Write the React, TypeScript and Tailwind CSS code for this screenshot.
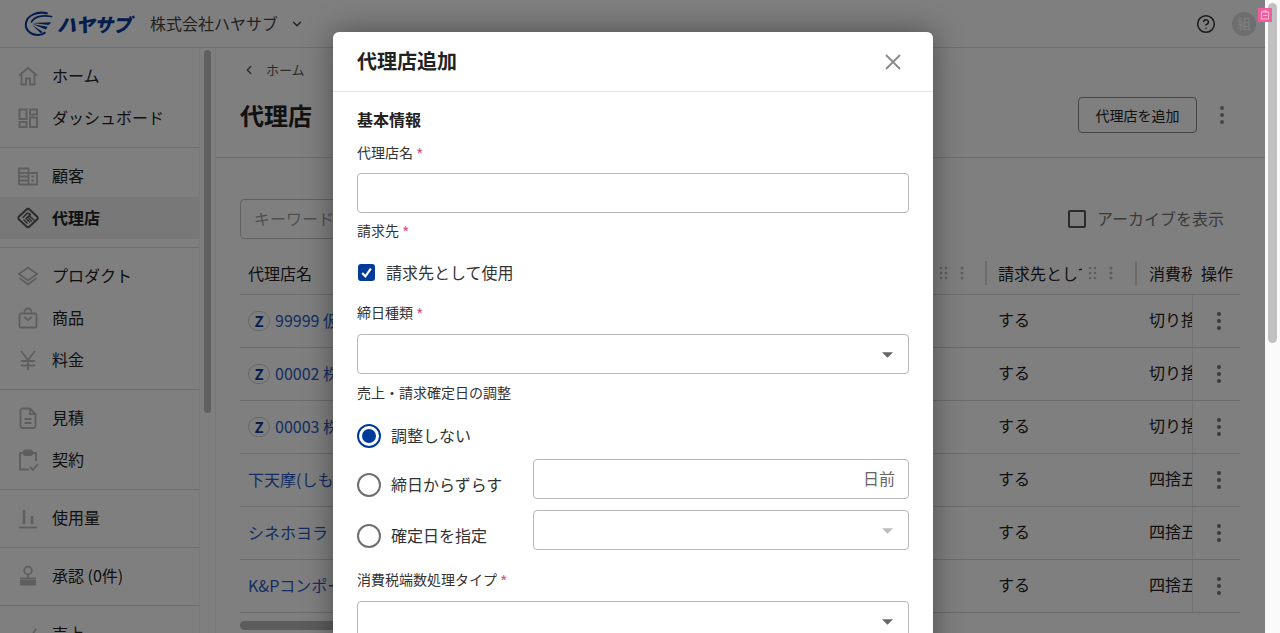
import { ChevronDown, ChevronLeft, CircleHelp } from "lucide-react";

const ink = "#222222";

function Dots({ className = "" }: { className?: string }) {
  return (
    <svg viewBox="0 0 6 20" className={`w-[6px] h-[20px] ${className}`} fill="currentColor">
      <circle cx="3" cy="3" r="2" />
      <circle cx="3" cy="10" r="2" />
      <circle cx="3" cy="17" r="2" />
    </svg>
  );
}

function DragHandle() {
  return (
    <svg viewBox="0 0 32 16" className="w-[32px] h-[16px] text-[#bdbdbd]" fill="currentColor">
      <circle cx="2" cy="3" r="1.3" /><circle cx="7" cy="3" r="1.3" />
      <circle cx="2" cy="8" r="1.3" /><circle cx="7" cy="8" r="1.3" />
      <circle cx="2" cy="13" r="1.3" /><circle cx="7" cy="13" r="1.3" />
      <circle cx="23" cy="3" r="1.6" /><circle cx="23" cy="8" r="1.6" /><circle cx="23" cy="13" r="1.6" />
    </svg>
  );
}

function Logo() {
  return (
    <div className="flex items-center">
      <svg viewBox="0 0 34 30" className="w-[31px] h-[28px] text-[#0b3a9c]" fill="none" stroke="currentColor">
        <path d="M26 3.500C15 .5 3 5 2 15c-.6 7 6 12.500 14 12 3.500-.2 6-1.500 7.500-3" strokeWidth="2.200" />
        <path d="M31 7C20 4.500 10 7 8 13.500" strokeWidth="1.800" />
        <path d="M9 14l21-1-3 3z" fill="currentColor" stroke="none" />
        <path d="M9 15l17 3-2 3z" fill="currentColor" stroke="none" />
        <path d="M9 16l12 8-3 1z" fill="currentColor" stroke="none" />
      </svg>
      <span className="ml-[2px] text-[19px] leading-none font-black italic text-[#0b3a9c] tracking-[-0.5px]">ハヤサブ</span>
    </div>
  );
}

const iconProps = {
  viewBox: "0 0 24 24",
  fill: "none",
  stroke: "currentColor",
  strokeWidth: 1.8,
  className: "w-[24px] h-[24px]",
};

const icons: Record<string, React.ReactNode> = {
  home: (
    <svg {...iconProps}>
      <path d="M3 11.500 12 4l9 7.500" />
      <path d="M5.500 10v10.500h4.500v-6h4v6h4.500V10" />
    </svg>
  ),
  dashboard: (
    <svg {...iconProps} strokeWidth={2}>
      <rect x="3.500" y="3.500" width="7" height="9.500" />
      <rect x="14" y="3.500" width="7" height="5" />
      <rect x="14" y="11.500" width="7" height="9.500" />
      <rect x="3.500" y="16" width="7" height="5" />
    </svg>
  ),
  customer: (
    <svg {...iconProps}>
      <path d="M3 20.500V4.500h9.500v16M12.500 9H21v11.500H3" />
      <path d="M3 8.800h9.500M3 12.500h9.500M3 16.500h9.500M15.500 12.500h2.500M15.500 16.500h2.500" />
    </svg>
  ),
  agency: (
    <svg {...iconProps} strokeWidth={2} strokeLinejoin="round" strokeLinecap="round">
      <path d="M10.500 3.500a2 2 0 0 1 3 0l7.500 7a2 2 0 0 1 0 3l-7.500 7a2 2 0 0 1-3 0l-7.500-7a2 2 0 0 1 0-3z" />
      <path d="M7 11.500 11.500 7l3 1.500-4 3.500M10.500 12l3-2 4.500 4M8 14l3 3M10 12.500l3.500 3.500M12 11.500l3.500 3.500" strokeWidth="1.500" />
    </svg>
  ),
  product: (
    <svg {...iconProps}>
      <path d="M12 3.500 21 10l-9 6.500L3 10z" />
      <path d="M3.500 14 12 20.500 20.500 14" />
    </svg>
  ),
  item: (
    <svg {...iconProps}>
      <rect x="3.500" y="7.500" width="17" height="14" rx="1.500" />
      <path d="M8.500 7.500V6a3.500 3.500 0 0 1 7 0v1.500M8 11l4 3 4-3" />
    </svg>
  ),
  price: (
    <svg {...iconProps}>
      <path d="M5 3l7 9 7-9M12 12v10M5 13h14M5 17.500h14" />
    </svg>
  ),
  quote: (
    <svg {...iconProps}>
      <path d="M4.500 4.500a2 2 0 0 1 2-2H14l5.500 5.500v12a2 2 0 0 1-2 2h-11a2 2 0 0 1-2-2z" />
      <path d="M14 2.500V8h5.500M8.500 13h7M8.500 17h7" />
    </svg>
  ),
  contract: (
    <svg {...iconProps}>
      <path d="M8 5H4v16.500h9M16 5h4v8" />
      <rect x="8" y="2.500" width="8" height="4.500" rx="1" fill="currentColor" />
      <path d="m14 19 3 3 5-6" />
    </svg>
  ),
  usage: (
    <svg {...iconProps}>
      <path d="M3 21.500h18" />
      <path d="M8 4v14M16 10v8" strokeWidth="2.600" />
    </svg>
  ),
  approval: (
    <svg {...iconProps}>
      <circle cx="12" cy="6.500" r="3.800" />
      <path d="M12 10.300V14M4 14.500h16" />
      <rect x="4" y="16" width="16" height="5.500" fill="currentColor" stroke="none" />
    </svg>
  ),
  sales: (
    <svg {...iconProps}>
      <path d="M4 20 10 12l4 4 6-9" />
    </svg>
  ),
};

const navGroups = [
  [
    { key: "home", label: "ホーム" },
    { key: "dashboard", label: "ダッシュボード" },
  ],
  [
    { key: "customer", label: "顧客" },
    { key: "agency", label: "代理店", active: true },
  ],
  [
    { key: "product", label: "プロダクト" },
    { key: "item", label: "商品" },
    { key: "price", label: "料金" },
  ],
  [
    { key: "quote", label: "見積" },
    { key: "contract", label: "契約" },
  ],
  [{ key: "usage", label: "使用量" }],
  [{ key: "approval", label: "承認 (0件)" }],
  [{ key: "sales", label: "売上" }],
];

function Sidebar() {
  return (
    <div className="flex h-full shrink-0">
      <nav className="w-[200px] overflow-hidden border-r border-[#f2f2f2]">
        {navGroups.map((group, i) => (
          <div key={i} className="pt-[7px] pb-2 border-b border-[#dcdcdc]">
            {group.map((item: { key: string; label: string; active?: boolean }) => (
              <div
                key={item.key}
                className={`flex items-center h-[42px] pl-[16px] gap-[12px] text-[16px] ${item.active ? "bg-[#f0f0f0] font-bold" : ""}`}
              >
                <span className={item.active ? "text-[#555555]" : "text-[#bdbdbd]"}>{icons[item.key]}</span>
                <span className="-mt-[2px]">{item.label}</span>
              </div>
            ))}
          </div>
        ))}
      </nav>
      <div className="w-[15px] pt-[2px] px-[4px]">
        <div className="h-[363px] rounded-full bg-[#c1c1c1]" />
      </div>
    </div>
  );
}

const rows = [
  { z: true, name: "99999 仮代理店", tax: "切り捨て" },
  { z: true, name: "00002 株式会社", tax: "切り捨て" },
  { z: true, name: "00003 株式会社", tax: "切り捨て" },
  { z: false, name: "下天摩(しもてんま)", tax: "四捨五入" },
  { z: false, name: "シネホヨラ", tax: "四捨五入" },
  { z: false, name: "K&Pコンポーネント", tax: "四捨五入" },
];

function AgencyTable() {
  return (
    <div className="mt-[16px] w-[1000px]">
      <div className="flex h-[40px] items-center border-b border-[#d8d8d8] pb-[4px] text-[16px]">
        <div className="w-[745px] shrink-0 pl-2 flex items-center">
          <span>代理店名</span>
          <span className="ml-auto mr-[14px]"><DragHandle /></span>
        </div>
        <div className="w-[150px] shrink-0 h-[24px] border-l-2 border-[#d8d8d8] pl-[11px] flex items-center">
          <span className="w-[84px] overflow-hidden whitespace-nowrap">請求先として使用</span>
          <span className="ml-[6px]"><DragHandle /></span>
        </div>
        <div className="w-[57px] shrink-0 h-[24px] border-l-2 border-[#d8d8d8] pl-[12px] overflow-hidden whitespace-nowrap">
          消費税端数
        </div>
        <div className="w-[48px] shrink-0 pl-[9px] whitespace-nowrap">操作</div>
      </div>
      {rows.map((row) => (
        <div key={row.name} className="flex h-[53px] items-center border-b border-[#d8d8d8] text-[16px]">
          <div className="w-[745px] shrink-0 pl-2 flex items-center text-[#2a5bc4]">
            {row.z && (
              <span className="mr-[5px] w-[22px] h-[20px] rounded-full border border-[#cfcfcf] flex items-center justify-center text-[15px] font-bold text-[#0b3a9c]">
                Z
              </span>
            )}
            <span className="-mt-[2px]">{row.name}</span>
          </div>
          <div className="w-[150px] shrink-0 pl-[13px] -mt-[4px]">する</div>
          <div className="w-[57px] shrink-0 pl-[14px] -mt-[4px] overflow-hidden whitespace-nowrap">{row.tax}</div>
          <div className="w-[48px] shrink-0 h-full border-l border-[#e6e6e6] flex items-center pl-[23px] text-[#777777]">
            <Dots />
          </div>
        </div>
      ))}
      <div className="mt-[8px] h-[9px] w-[400px] rounded-full bg-[#b8b8b8]" />
    </div>
  );
}

function Label({ text, required = true }: { text: string; required?: boolean }) {
  return (
    <div className="h-[20px] text-[14px] leading-[18px] text-[#333333]">
      {text}
      {required && <span className="ml-[3px] text-[16px] leading-none align-[-3px] text-[#e0557f]">*</span>}
    </div>
  );
}

function Caret({ light = false }: { light?: boolean }) {
  return (
    <svg viewBox="0 0 12 6" className={`mt-[2px] w-[11px] h-[6px] ${light ? "text-[#bdbdbd]" : "text-[#666666]"}`} fill="currentColor">
      <path d="M0 0h12L6 6z" />
    </svg>
  );
}

function SelectBox({ className = "", light = false }: { className?: string; light?: boolean }) {
  return (
    <div className={`h-[40px] border border-[#b8b8b8] rounded-[4px] bg-white flex items-center justify-end pr-[15px] ${className}`}>
      <Caret light={light} />
    </div>
  );
}

function Radio({ checked = false }: { checked?: boolean }) {
  return (
    <span className={`w-[24px] h-[24px] shrink-0 rounded-full border-2 flex items-center justify-center ${checked ? "border-[#003a9b]" : "border-[#6f6f6f]"}`}>
      {checked && <span className="w-[14px] h-[14px] rounded-full bg-[#003a9b]" />}
    </span>
  );
}

function Modal() {
  return (
    <div className="absolute left-[333px] top-[32px] w-[600px] h-[640px] bg-white rounded-t-[6px] shadow-[0_0_30px_rgba(0,0,0,0.4)] text-[#222222]">
      <div className="h-[60px] border-b border-[#e5e5e5] pl-6 pr-[32px] flex items-center justify-between">
        <h2 className="text-[20px] font-bold -mt-[2px]">代理店追加</h2>
        <svg viewBox="0 0 16 16" className="w-[16px] h-[16px] text-[#8a8a8a]" fill="none" stroke="currentColor" strokeWidth="1.800">
          <path d="M1 1l14 14M15 1 1 15" />
        </svg>
      </div>
      <div className="px-6 pt-4">
        <h3 className="h-[24px] text-[16px] leading-[22px] font-bold">基本情報</h3>
        <div className="mt-[11px]"><Label text="代理店名" /></div>
        <div className="mt-[10px] h-[40px] border border-[#b8b8b8] rounded-[4px]" />
        <div className="mt-2"><Label text="請求先" /></div>
        <div className="mt-5 h-[24px] flex items-center text-[16px] text-[#333333]">
          <span className="ml-[1px] -mt-[1px] w-[17px] h-[17px] rounded-[3px] bg-[#003a9b] flex items-center justify-center">
            <svg viewBox="0 0 12 12" className="w-[13px] h-[13px]" fill="none" stroke="white" strokeWidth="2">
              <path d="m2 6.500 3 3 5-7" />
            </svg>
          </span>
          <span className="ml-[11px] -mt-[2px]">請求先として使用</span>
        </div>
        <div className="mt-[18px]"><Label text="締日種類" /></div>
        <SelectBox className="mt-[11px]" />
        <div className="mt-[9px]"><Label text="売上・請求確定日の調整" required={false} /></div>
        <div className="mt-[21px] h-[24px] flex items-center gap-[10px] text-[16px] text-[#333333]">
          <Radio checked />
          <span className="-mt-[2px]">調整しない</span>
        </div>
        <div className="mt-[11px] flex text-[16px] text-[#333333]">
          <div className="w-[176px] pt-[14px] flex items-center gap-[10px] h-[38px]">
            <Radio />
            <span className="-mt-[2px]">締日からずらす</span>
          </div>
          <div className="flex-1 h-[40px] border border-[#b8b8b8] rounded-[4px] flex items-center justify-end pr-[13px] text-[#666666]">
            <span className="-mt-[2px]">日前</span>
          </div>
        </div>
        <div className="mt-[11px] flex text-[16px] text-[#333333]">
          <div className="w-[176px] pt-[14px] flex items-center gap-[10px] h-[38px]">
            <Radio />
            <span className="-mt-[2px]">確定日を指定</span>
          </div>
          <SelectBox className="flex-1" light />
        </div>
        <div className="mt-5"><Label text="消費税端数処理タイプ" /></div>
        <SelectBox className="mt-[11px]" />
      </div>
    </div>
  );
}

export default function App() {
  return (
    <div
      className="relative flex h-screen w-full overflow-hidden bg-white font-['Noto_Sans_CJK_JP',sans-serif]"
      style={{ color: ink }}
    >
      <div className="relative flex-1 min-w-0 flex flex-col">
        <header className="h-[48px] shrink-0 border-b border-[#dcdcdc] flex items-center pl-[24px] pr-[9px]">
          <Logo />
          <span className="ml-[19px] -mt-[2px] text-[16px] text-[#444444]">株式会社ハヤサブ</span>
          <ChevronDown className="ml-[12px] w-[14px] h-[14px] text-[#444444]" strokeWidth={2.4} />
          <CircleHelp className="ml-auto w-[20px] h-[20px] text-[#333333]" strokeWidth={1.8} />
          <div className="ml-[16px] w-[24px] h-[24px] rounded-full bg-[#dcdcdc] text-white text-[14px] flex items-center justify-center">
            組
          </div>
        </header>
        <div className="flex flex-1 min-h-0">
          <Sidebar />
          <main className="flex-1 min-w-0 border-l border-[#f0f0f0]">
            <div className="h-[110px] border-b border-[#dcdcdc] pl-[24px] pr-[40px]">
              <div className="pt-[9px] h-[35px] flex items-center gap-[10px] text-[13px] text-[#555555]">
                <ChevronLeft className="w-[14px] h-[14px] ml-[2px]" strokeWidth={2.4} />
                <span>ホーム</span>
              </div>
              <div className="mt-[14px] flex items-center justify-between">
                <h1 className="text-[24px] font-bold">代理店</h1>
                <div className="flex items-center gap-[22px]">
                  <button className="h-[36px] w-[119px] border border-[#8a8a8a] rounded-[4px] text-[14px]">
                    代理店を追加
                  </button>
                  <Dots className="text-[#8a8a8a]" />
                </div>
              </div>
            </div>
            <div className="pl-[24px] pr-[25px]">
              <div className="mt-[41px] flex items-center justify-between">
                <div className="w-[400px] h-[40px] border border-[#c4c4c4] rounded-[4px] pl-[13px] pb-[2px] flex items-center text-[16px] text-[#a0a0a0]">
                  キーワード
                </div>
                <div className="flex items-center text-[16px] text-[#757575]">
                  <span className="w-[18px] h-[18px] border-2 border-[#555555] rounded-[2px]" />
                  <span className="ml-[11px] mr-[16px] -mt-[2px]">アーカイブを表示</span>
                </div>
              </div>
              <AgencyTable />
            </div>
          </main>
        </div>
        <div className="absolute inset-0 bg-black/50" />
      </div>
      <div className="w-[15px] shrink-0 bg-[#fafafa] pt-[3px] px-[3px]">
        <div className="h-[340px] rounded-full bg-[#c1c1c1]" />
      </div>
      <Modal />
      <div className="absolute left-[1258px] top-[8px] w-[14px] h-[14px] bg-[#ef5f9f] flex items-center justify-center">
        <svg viewBox="0 0 10 10" className="w-[10px] h-[10px]" fill="none" stroke="#ffd5e6" strokeWidth="0.8">
          <rect x="1.500" y="2" width="7" height="7" />
          <path d="M3.500 2V1h3v1M3 5.500h4" />
        </svg>
      </div>
    </div>
  );
}
